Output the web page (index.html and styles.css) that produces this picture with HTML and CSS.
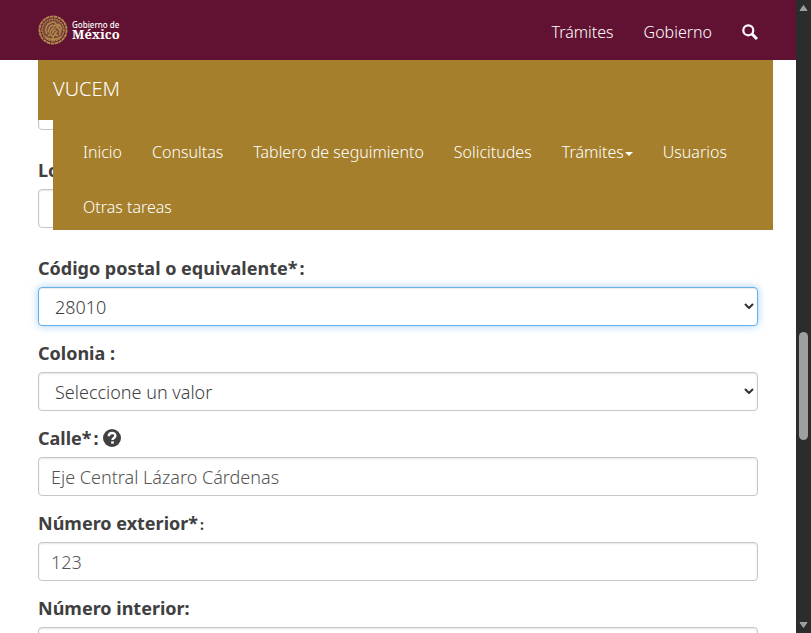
FILE: index.html
```html
<!DOCTYPE html>
<html lang="es">
<head>
<meta charset="utf-8">
<meta name="viewport" content="width=device-width, initial-scale=1">
<title>VUCEM</title>
<link rel="stylesheet" href="styles.css">
</head>
<body>
<div class="page">
  <header class="topbar">
    <a class="logo" href="#" aria-label="Gobierno de México">
      <svg class="seal" viewBox="0 0 60 60" fill="none" stroke="#b08a4c" aria-hidden="true">
        <circle cx="30" cy="30" r="23" fill="#7d4a3a" stroke="none"/>
        <circle cx="30" cy="30" r="27" stroke-width="4" stroke-dasharray="7 1"/>
        <circle cx="30" cy="30" r="22" stroke-width="3" stroke-dasharray="3 2"/>
        <path d="M17 38c-4-10 0-20 9-23 5-2 9 0 11 4l5 2-5 3c6 3 9 9 6 16M20 35c1-8 4-13 10-15M24 37c1-6 4-10 9-12M29 38c0-4 3-8 7-9M34 39c0-3 2-5 5-6M36 20l-6 2" stroke-width="3"/>
        <path d="M14 43c5 5 10 6 16 6s11-1 16-6M20 42l5-3 5 4 5-4 5 3M30 43v9M40 18c5 3 7 8 6 13" stroke-width="3"/>
      </svg>
      <span class="wordmark"><span class="wordmark-small">Gobierno de</span><span class="wordmark-big">México</span></span>
    </a>
    <nav class="toplinks" aria-label="Gobierno">
      <a href="#">Trámites</a>
      <a href="#">Gobierno</a>
      <a class="search" href="#" aria-label="Buscar">
        <svg viewBox="0 0 16 16" fill="none" stroke="#fff" aria-hidden="true"><circle cx="6.3" cy="6.3" r="5" stroke-width="2.2"/><path d="M10 10l5 5" stroke-width="3"/></svg>
      </a>
    </nav>
  </header>

  <nav class="subnav" aria-label="VUCEM">
    <a class="brand" href="#">VUCEM</a>
    <ul class="menu">
      <li><a href="#">Inicio</a></li>
      <li><a href="#">Consultas</a></li>
      <li><a href="#">Tablero de seguimiento</a></li>
      <li><a href="#">Solicitudes</a></li>
      <li><a href="#">Trámites<span class="caret"></span></a></li>
      <li><a href="#">Usuarios</a></li>
      <li><a href="#">Otras tareas</a></li>
    </ul>
  </nav>

  <form class="form">
    <div class="group spaced">
      <input class="control" type="text" aria-label="Municipio">
    </div>
    <div class="group spaced">
      <label for="localidad">Localidad:</label>
      <input class="control" id="localidad" type="text">
    </div>
    <div class="group">
      <label for="cp">Código postal o equivalente<span class="required">*</span>:</label>
      <div class="select focused">
        <select class="control" id="cp"><option>28010</option></select>
        <svg class="chevron" viewBox="0 0 10 6" aria-hidden="true"><path d="M1 1l4 4 4-4"/></svg>
      </div>
    </div>
    <div class="group">
      <label for="colonia">Colonia :</label>
      <div class="select">
        <select class="control" id="colonia"><option>Seleccione un valor</option></select>
        <svg class="chevron" viewBox="0 0 10 6" aria-hidden="true"><path d="M1 1l4 4 4-4"/></svg>
      </div>
    </div>
    <div class="group">
      <label for="calle">Calle<span class="required">*</span>:
        <svg class="help" viewBox="0 0 18 18" aria-hidden="true"><circle cx="9" cy="9" r="9" fill="#404041"/><path d="M5.8 7.2C5.8 2.900 12.400 3 12.400 6.800c0 2.200-2.900 2.200-2.900 4.200" fill="none" stroke="#fff" stroke-width="2.400"/><path d="M8.200 12.300h2.600v2.400H8.200z" fill="#fff"/></svg>
      </label>
      <input class="control" id="calle" type="text" value="Eje Central Lázaro Cárdenas">
    </div>
    <div class="group">
      <label for="exterior">Número exterior<span class="required">*</span><span class="colon">:</span></label>
      <input class="control" id="exterior" type="text" value="123">
    </div>
    <div class="group">
      <label for="interior">Número interior:</label>
      <input class="control" id="interior" type="text">
    </div>
  </form>
</div>
<div class="scrollbar" aria-hidden="true">
  <svg class="arrow" viewBox="0 0 9 7"><path d="M4.500 1L8 6H1z"/></svg>
  <div class="track"><div class="thumb"></div></div>
  <svg class="arrow" viewBox="0 0 9 7"><path d="M4.500 6L8 1H1z"/></svg>
</div>
</body>
</html>
```
FILE: styles.css
```css
* { box-sizing: border-box; }

body {
  margin: 0;
  height: 100vh;
  display: grid;
  grid-template-columns: 1fr 15px;
  overflow: hidden;
  background: #fff;
  color: #404041;
  font-family: "Noto Sans", "Open Sans", sans-serif;
  font-size: 18px;
  font-weight: 300;
}

a { color: #fff; text-decoration: none; }

.page { position: relative; height: 100vh; overflow: hidden; }

.topbar {
  height: 60px;
  padding: 0 38px;
  display: flex;
  align-items: center;
  justify-content: space-between;
  background: #611232;
}

.logo { display: flex; align-items: center; gap: 4px; }
.seal { width: 30px; height: 30px; }
.wordmark { display: flex; flex-direction: column; font-weight: 700; }
.wordmark-small { font-size: 8px; font-weight: 500; line-height: 8px; }
.wordmark-big { font-family: "Noto Serif", "DejaVu Serif", serif; font-size: 13px; line-height: 11px; }

.toplinks {
  display: flex;
  align-items: center;
  gap: 30px;
  padding-top: 4px;
  font-size: 16px;
  line-height: 20px;
}
.search svg { display: block; width: 16px; height: 16px; }

/* Section menu floats over the form */
.subnav {
  position: absolute;
  top: 60px;
  left: 38px;
  right: 23px;
  font-size: 16px;
}
.brand {
  display: block;
  height: 60px;
  padding: 0 15px;
  background: #a57f2c;
  font-size: 20px;
  line-height: 58px;
}
.menu {
  display: flex;
  flex-wrap: wrap;
  margin: 0 0 0 15px;
  padding: 0 15px;
  background: #a57f2c;
  list-style: none;
}
.menu a {
  display: block;
  padding: 22px 15px 13px;
  line-height: 20px;
}
.caret {
  display: inline-block;
  margin-left: 1px;
  vertical-align: middle;
  border: 4px solid transparent;
  border-top-color: #fff;
  border-bottom: 0;
}

.form { padding: 31px 38px 0; }
.group { margin-bottom: 14px; }
.spaced { margin-bottom: 27px; }

label {
  display: block;
  height: 26px;
  margin-bottom: 6px;
  font-weight: 700;
  line-height: 26px;
}
.required { margin-right: 2px; }
.help { width: 18px; height: 18px; vertical-align: -2px; }
.colon { font-size: 14px; }

.control {
  display: block;
  width: 100%;
  height: 39px;
  padding: 0 12px;
  border: 1px solid #c6c6c6;
  border-radius: 4px;
  background: #fff;
  box-shadow: inset 0 1px 2px rgba(0, 0, 0, 0.1);
  color: #555;
  font: inherit;
}
.select { position: relative; }
.select .control { appearance: none; padding: 0 16px; color: #404041; }
.focused .control {
  border-color: #66afe9;
  box-shadow: inset 0 1px 1px rgba(0, 0, 0, 0.08), 0 0 8px rgba(102, 175, 233, 0.6);
}
.chevron {
  position: absolute;
  right: 4px;
  top: 16px;
  width: 10px;
  height: 6px;
  fill: none;
  stroke: #303030;
  stroke-width: 2;
  pointer-events: none;
}

.scrollbar {
  height: 100vh;
  padding: 4px 3px;
  display: flex;
  flex-direction: column;
  background: #2c2c2c;
}
.arrow { width: 9px; height: 8px; fill: #9f9f9f; stroke: #9f9f9f; stroke-linejoin: round; }
.track { flex: 1; padding-top: 320px; }
.thumb { height: 108px; border-radius: 5px; background: #9f9f9f; }
```
